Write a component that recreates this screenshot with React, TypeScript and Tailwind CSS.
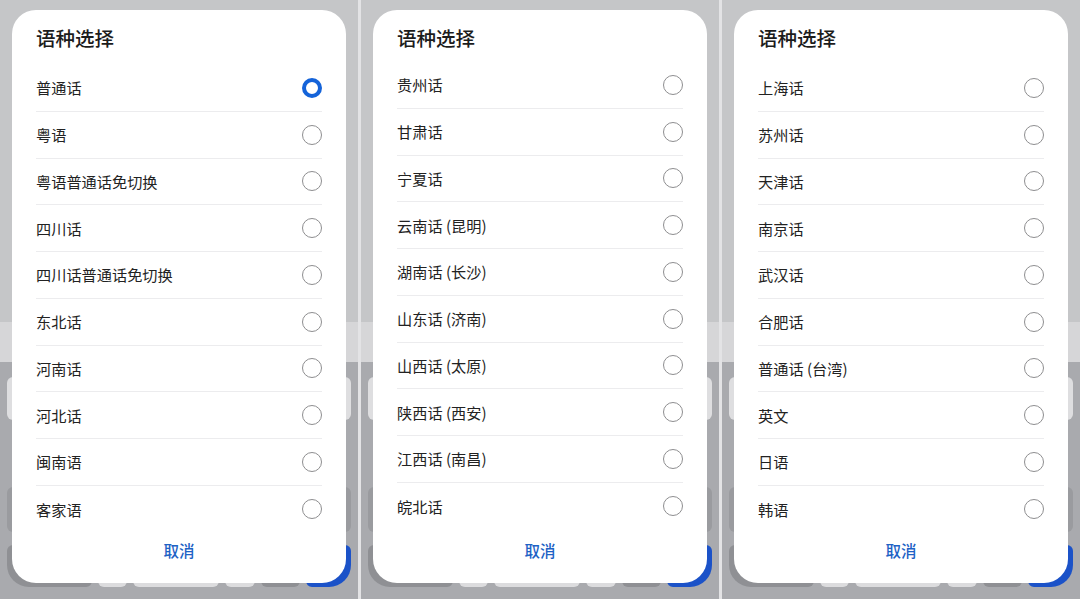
import React from "react";

type Panel = { items: string[]; selected?: number; listTop: string };

const panels: Panel[] = [
  {
    items: ["普通话", "粤语", "粤语普通话免切换", "四川话", "四川话普通话免切换", "东北话", "河南话", "河北话", "闽南语", "客家语"],
    selected: 0,
    listTop: "mt-[15px]",
  },
  {
    items: ["贵州话", "甘肃话", "宁夏话", "云南话 (昆明)", "湖南话 (长沙)", "山东话 (济南)", "山西话 (太原)", "陕西话 (西安)", "江西话 (南昌)", "皖北话"],
    listTop: "mt-[12px]",
  },
  {
    items: ["上海话", "苏州话", "天津话", "南京话", "武汉话", "合肥话", "普通话 (台湾)", "英文", "日语", "韩语"],
    listTop: "mt-[15px]",
  },
];

function Radio({ on }: { on: boolean }) {
  if (on) {
    return <div className="w-[20px] h-[20px] rounded-full border-[4px] border-[#1463d9] bg-white shrink-0" />;
  }
  return <div className="w-[20px] h-[20px] rounded-full border border-[#8e8e90] bg-white shrink-0" />;
}

function Keyboard() {
  return (
    <div className="flex flex-col flex-1 bg-[#a9aaae]">
      <div className="flex gap-[7px] px-[7px] pt-[15px]">
        <div className="h-[43px] flex-1 rounded-[6px] bg-[#dedee0]" />
        <div className="h-[43px] flex-1 rounded-[6px] bg-[#dedee0]" />
        <div className="h-[43px] flex-1 rounded-[6px] bg-[#dedee0]" />
        <div className="h-[43px] flex-1 rounded-[6px] bg-[#dedee0]" />
        <div className="h-[43px] flex-1 rounded-[6px] bg-[#dedee0]" />
      </div>
      <div className="flex gap-[7px] px-[7px] mt-[67px]">
        <div className="h-[45px] flex-1 rounded-[6px] bg-[#9a9b9f]" />
        <div className="h-[45px] flex-1 rounded-[6px] bg-[#9a9b9f]" />
        <div className="h-[45px] flex-1 rounded-[6px] bg-[#9a9b9f]" />
        <div className="h-[45px] flex-1 rounded-[6px] bg-[#9a9b9f]" />
      </div>
      <div className="flex gap-[6px] px-[7px] mt-[13px] items-end">
        <div className="h-[42px] w-[85px] rounded-[6px] rounded-bl-[22px] bg-[#8f9094]" />
        <div className="h-[42px] w-[29px] rounded-[6px] bg-[#dcdcde]" />
        <div className="h-[42px] w-[86px] rounded-[6px] bg-[#dcdcde]" />
        <div className="h-[42px] w-[30px] rounded-[6px] bg-[#dcdcde]" />
        <div className="h-[42px] w-[39px] rounded-[6px] bg-[#8f9094]" />
        <div className="h-[42px] flex-1 rounded-[6px] rounded-br-[22px] bg-[#1b52c8]" />
      </div>
    </div>
  );
}

function PanelView({ p }: { p: Panel }) {
  return (
    <div className="relative w-[358px] h-[599px] flex flex-col shrink-0 overflow-hidden">
      <div className="h-[322px] bg-[#c5c6c8]" />
      <div className="h-[40px] bg-[#d6d6d8]" />
      <Keyboard />
      <div className="absolute left-[12px] top-[10px] w-[334px] h-[573px] rounded-[24px] bg-white flex flex-col px-[24px]">
        <div className="pt-[16px] h-[40px] text-[19.5px] leading-[24px] font-medium text-[#1c1c1c]">语种选择</div>
        <div className={`flex flex-col ${p.listTop}`}>
          {p.items.map((t, i) => (
            <div
              key={t}
              className={`flex items-center justify-between h-[46.75px] ${i < p.items.length - 1 ? "border-b border-[#ececee]" : ""}`}
            >
              <span className="text-[15.2px] text-[#222222]">{t}</span>
              <Radio on={p.selected === i} />
            </div>
          ))}
        </div>
        <div className="mt-auto pb-[23px] flex justify-center">
          <span className="text-[15.5px] leading-[20px] font-medium text-[#1d62c5]">取消</span>
        </div>
      </div>
    </div>
  );
}

export default function App() {
  return (
    <div
      className="w-[1080px] h-[599px] flex bg-[#e2e2e4] overflow-hidden"
      style={{ fontFamily: '"Noto Sans CJK SC", "Noto Sans", sans-serif' }}
    >
      <PanelView p={panels[0]} />
      <div className="w-[3px] shrink-0 bg-[#e3e3e5]" />
      <PanelView p={panels[1]} />
      <div className="w-[3px] shrink-0 bg-[#e3e3e5]" />
      <PanelView p={panels[2]} />
    </div>
  );
}
